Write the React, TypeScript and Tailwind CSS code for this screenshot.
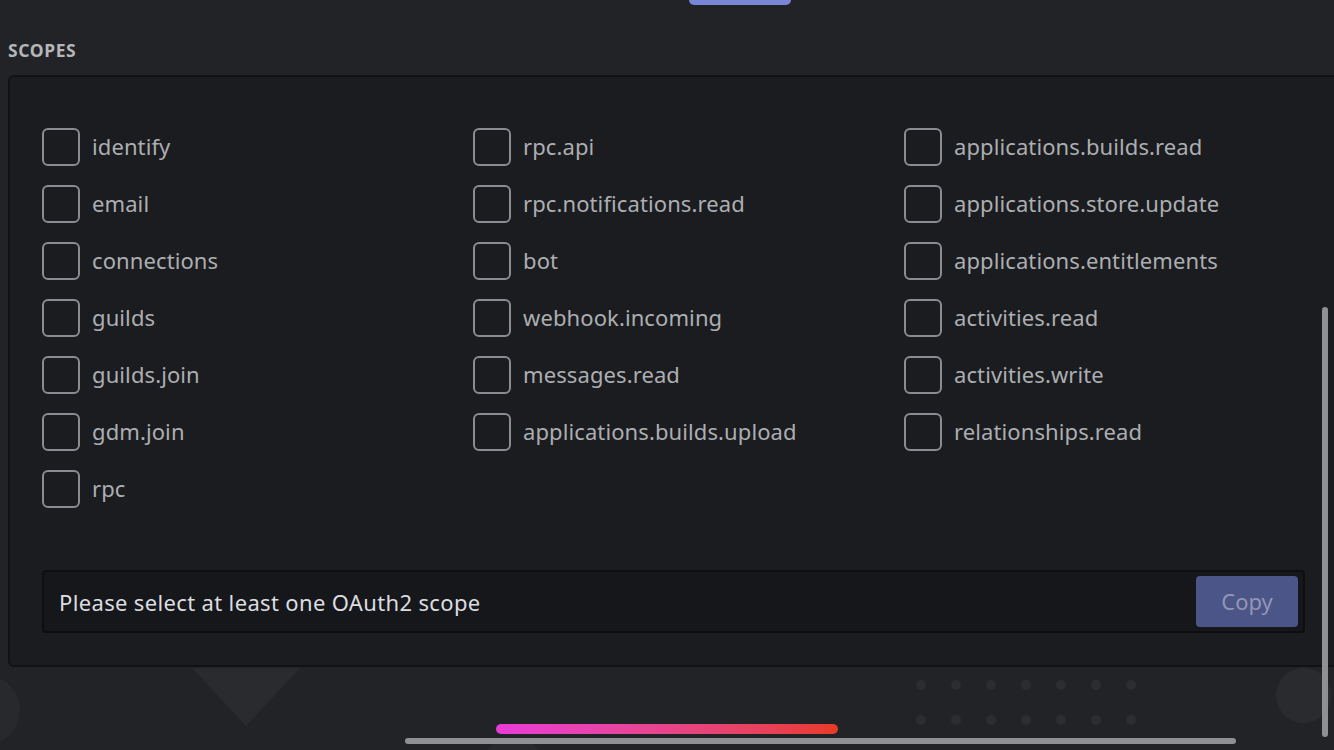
import React from "react";

const cols: string[][] = [
  ["identify", "email", "connections", "guilds", "guilds.join", "gdm.join", "rpc"],
  ["rpc.api", "rpc.notifications.read", "bot", "webhook.incoming", "messages.read", "applications.builds.upload"],
  [
    "applications.builds.read",
    "applications.store.update",
    "applications.entitlements",
    "activities.read",
    "activities.write",
    "relationships.read",
  ],
];

function Item({ label }: { label: string }) {
  return (
    <div className="flex h-[57px] items-center gap-[12px]">
      <div className="h-[38px] w-[38px] shrink-0 rounded-[6px] border-2 border-[#8a8c91]" />
      <span className="pb-[2px] text-[22px] leading-none tracking-[0.1px] text-[#acaeb2]">{label}</span>
    </div>
  );
}

export default function App() {
  return (
    <div
      className="relative h-[750px] w-[1334px] overflow-hidden bg-[#222327]"
      style={{ fontFamily: '"Noto Sans", "Open Sans", sans-serif' }}
    >
      <div className="ml-[689px] h-[5px] w-[102px] rounded-b-[5px] bg-[#7985d6]" />
      <div className="ml-[8px] mt-[35px] text-[17.5px] font-bold leading-[20px] tracking-[0.6px] text-[#b4b6ba]">
        SCOPES
      </div>
      <div className="ml-[8px] mt-[15px] h-[592px] w-[1345px] rounded-[6px] border-2 border-[#111215] bg-[#1b1c1f] pl-[32px] pt-[41px]">
        <div className="grid grid-cols-[431px_431px_431px]">
          {cols.map((c, i) => (
            <div key={i} className="flex flex-col">
              {c.map((l) => (
                <Item key={l} label={l} />
              ))}
            </div>
          ))}
        </div>
        <div className="mt-[53px] flex h-[63px] w-[1263px] items-center justify-between rounded-[4px] border-2 border-[#0d0e10] bg-[#16171a] pl-[15px] pr-[5px]">
          <span className="text-[22px] leading-none tracking-[0.35px] text-[#dcdde0]">
            Please select at least one OAuth2 scope
          </span>
          <div className="flex h-[51px] w-[102px] items-center justify-center rounded-[4px] bg-[#4b5588] text-[22px] text-[#9196b4]">
            Copy
          </div>
        </div>
      </div>

      {/* background decorations */}
      <div className="absolute left-[-50px] top-[675px] h-[70px] w-[70px] rounded-full bg-[#28292d]" />
      <div
        className="absolute left-[192px] top-[668px] h-[58px] w-[108px] bg-[#2a2b2f]"
        style={{ clipPath: "polygon(0 0, 100% 0, 50% 100%)" }}
      />
      <div className="absolute left-[1276px] top-[668px] h-[55px] w-[55px] rounded-full bg-[#2a2b2f]" />
      <div className="absolute left-[916px] top-[680px] grid grid-cols-[repeat(7,35px)] gap-y-[25px]">
        {Array.from({ length: 14 }).map((_, i) => (
          <div key={i} className="h-[10px] w-[10px] rounded-full bg-[#2c2d31]" />
        ))}
      </div>
      <div className="absolute left-[485px] top-[740px] h-[40px] w-[56px] rounded-full bg-[#28292d]" />

      {/* overlays */}
      <div className="absolute left-[496px] top-[724px] h-[10px] w-[342px] rounded-full bg-gradient-to-r from-[#e93bd8] to-[#e83a24]" />
      <div className="absolute left-[405px] top-[738px] h-[6px] w-[831px] rounded-full bg-[#8f9094]" />
      <div className="absolute left-[1322px] top-[307px] h-[430px] w-[6px] rounded-full bg-[#8f9094]" />
    </div>
  );
}
